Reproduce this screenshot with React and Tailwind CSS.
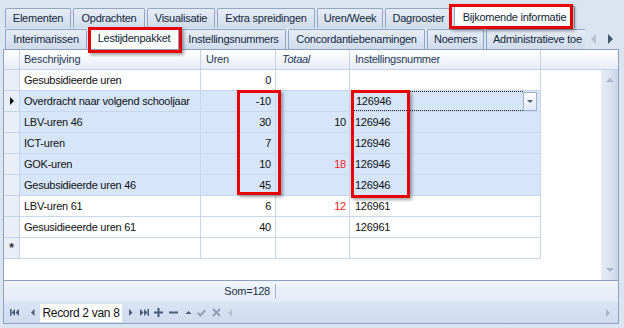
import React from 'react';

const topTabs = [
    { label: 'Elementen', w: 'w-[66px]' },
    { label: 'Opdrachten', w: 'w-[72px]' },
    { label: 'Visualisatie', w: 'w-[68px]' },
    { label: 'Extra spreidingen', w: 'w-[98px]' },
    { label: 'Uren/Week', w: 'w-[66px]' },
    { label: 'Dagrooster', w: 'w-[67px]' },
    { label: 'Bijkomende informatie', w: 'w-[121px]', active: true },
];

const subTabs = [
    { label: 'Interimarissen', w: 'w-[82px]' },
    { label: 'Lestijdenpakket', w: 'w-[90px]', active: true },
    { label: 'Instellingsnummers', w: 'w-[105px]' },
    { label: 'Concordantiebenamingen', w: 'w-[137px]' },
    { label: 'Noemers', w: 'w-[57px]' },
    { label: 'Administratieve toe', w: 'w-[100px]', clip: true },
];

const rows = [
    { name: 'Gesubsidieerde uren', uren: '0', totaal: '', nr: '' },
    { name: 'Overdracht naar volgend schooljaar', uren: '-10', totaal: '', nr: '126946', sel: true, current: true },
    { name: 'LBV-uren 46', uren: '30', totaal: '10', nr: '126946', sel: true },
    { name: 'ICT-uren', uren: '7', totaal: '', nr: '126946', sel: true },
    { name: 'GOK-uren', uren: '10', totaal: '18', red: true, nr: '126946', sel: true },
    { name: 'Gesubsidieerde uren 46', uren: '45', totaal: '', nr: '126946', sel: true },
    { name: 'LBV-uren 61', uren: '6', totaal: '12', red: true, nr: '126961' },
    { name: 'Gesusidieeerde uren 61', uren: '40', totaal: '', nr: '126961' },
];

const Tab = ({ label, w, active, clip }) => (
    <div
        className={`${w} flex items-center justify-center shrink-0 border border-b-0 rounded-t-[2px] whitespace-nowrap overflow-hidden ${active
            ? 'h-[22px] bg-white border-[#8ea3bf] text-[#0f1f33]'
            : 'h-[20px] bg-gradient-to-b from-[#e6edf7] to-[#cfdbec] border-[#92a6c2] text-[#15283d]'
            } ${clip ? 'justify-start pl-[6px]' : ''}`}
    >
        {label}
    </div>
);

const Tri = ({ dir = 'right', color = '#4a5a78', size = 4 }) => {
    const pts = {
        right: `0,0 ${size},${size} 0,${size * 2}`,
        left: `${size},0 0,${size} ${size},${size * 2}`,
        up: `0,${size} ${size},0 ${size * 2},${size}`,
        down: `0,0 ${size * 2},0 ${size},${size}`,
    }[dir];
    const vw = dir === 'up' || dir === 'down' ? size * 2 : size;
    const vh = dir === 'up' || dir === 'down' ? size : size * 2;
    return (
        <svg width={vw} height={vh} viewBox={`0 0 ${vw} ${vh}`}>
            <polygon points={pts} fill={color} />
        </svg>
    );
};

const DataRow = ({ r }) => {
    const cell = r.sel ? 'bg-[#d6e5fa]' : 'bg-white';
    return (
        <div className="flex h-[21px] shrink-0">
            <div className="w-[16px] flex items-center justify-center bg-[#e9eef7] border-r border-b border-[#c3d2e6]">
                {r.current && <Tri color="#111" size={4} />}
            </div>
            <div className={`w-[181px] ${cell} border-r border-b border-[#c8d7ec] pl-[4px] flex items-center text-[#111] whitespace-nowrap`}>{r.name}</div>
            <div className={`w-[75px] ${cell} border-r border-b border-[#c8d7ec] pr-[4px] flex items-center justify-end text-[#111]`}>{r.uren}</div>
            <div className={`w-[74px] ${cell} border-r border-b border-[#c8d7ec] pr-[3px] flex items-center justify-end ${r.red ? 'text-[#ff1a1a]' : 'text-[#111]'}`}>{r.totaal}</div>
            <div className={`w-[191px] ${cell} border-r border-b border-[#c8d7ec] flex items-center text-[#111]`}>
                {r.current ? (
                    <div className="flex items-center w-full h-full pl-[1px] pr-[3px]">
                        <div className="flex-1 h-[20px] border border-dotted border-[#222] border-r-0 pl-[4px] flex items-center">{r.nr}</div>
                        <div className="w-[14px] h-[19px] border border-[#9fb2cc] bg-gradient-to-b from-white to-[#dde6f3] flex items-center justify-center">
                            <Tri dir="down" color="#4f5d75" size={3} />
                        </div>
                    </div>
                ) : (
                    <span className="pl-[5px]">{r.nr}</span>
                )}
            </div>
        </div>
    );
};

const NavIcon = ({ children, className = '' }) => (
    <div className={`flex items-center justify-center ${className}`}>{children}</div>
);

export default function App() {
    return (
        <div className="w-[624px] h-[328px] bg-[#dbe5f2] relative overflow-hidden font-['Liberation_Sans',Arial,sans-serif] text-[11px] tracking-[-0.25px] leading-none">
            {/* Main tab strip */}
            <div className="flex items-end gap-[2px] h-[28px] pl-[5px]">
                {topTabs.map((t) => <Tab key={t.label} {...t} />)}
            </div>

            {/* Sub tab strip */}
            <div className="flex items-end h-[21px] pl-[5px] pr-[5px]">
                <div className="flex items-end gap-[2px] w-[580px] overflow-hidden">
                    {subTabs.map((t) => <Tab key={t.label} {...t} />)}
                </div>
                <div className="flex-1 flex items-center justify-around h-[20px] pb-[1px]">
                    <Tri dir="left" color="#b4c0d0" size={5} />
                    <Tri dir="right" color="#46556e" size={5} />
                </div>
            </div>

            {/* Grid */}
            <div className="ml-[3px] w-[616px] h-[275px] border border-[#8ba1be] bg-white flex flex-col">
                {/* Header */}
                <div className="flex h-[20px] shrink-0 bg-gradient-to-b from-white to-[#e5ecf6] text-[#1f3a5c]">
                    <div className="w-[16px] border-r border-b border-[#c3d2e6]" />
                    <div className="w-[181px] border-r border-b border-[#c3d2e6] pl-[4px] flex items-center">Beschrijving</div>
                    <div className="w-[75px] border-r border-b border-[#c3d2e6] pl-[5px] flex items-center">Uren</div>
                    <div className="w-[74px] border-r border-b border-[#c3d2e6] pl-[6px] flex items-center italic">Totaal</div>
                    <div className="w-[191px] border-r border-b border-[#c3d2e6] pl-[5px] flex items-center">Instellingsnummer</div>
                    <div className="flex-1 border-b border-[#c3d2e6]" />
                </div>

                {/* Body */}
                <div className="flex h-[210px] shrink-0">
                    <div className="flex-1 flex flex-col">
                        {rows.map((r) => <DataRow key={r.name} r={r} />)}
                        <div className="flex h-[21px] shrink-0">
                            <div className="w-[16px] flex items-center justify-center bg-[#e9eef7] border-r border-b border-[#c3d2e6] text-[12px] font-bold text-[#333]">*</div>
                            <div className="w-[181px] border-r border-b border-[#c8d7ec]" />
                            <div className="w-[75px] border-r border-b border-[#c8d7ec]" />
                            <div className="w-[74px] border-r border-b border-[#c8d7ec]" />
                            <div className="w-[191px] border-r border-b border-[#c8d7ec]" />
                        </div>
                    </div>
                    {/* Vertical scrollbar */}
                    <div className="w-[17px] bg-gradient-to-r from-[#e4ebf5] via-[#dbe4f0] to-[#c9d6e8] flex flex-col items-center justify-between py-[8px]">
                        <Tri dir="up" color="#a9b6c9" size={4} />
                        <Tri dir="down" color="#a9b6c9" size={4} />
                    </div>
                </div>

                {/* Summary footer */}
                <div className="flex h-[22px] shrink-0 border-t border-[#8ba1be] bg-gradient-to-b from-[#eff4fb] to-[#e3ebf6]">
                    <div className="w-[197px]" />
                    <div className="w-[75px] border-r border-[#a3b4cb] my-[3px] pr-[5px] flex items-center justify-end text-[#1d2f48]">Som=128</div>
                </div>

                {/* Navigator */}
                <div className="flex items-center h-[21px] shrink-0 bg-gradient-to-b from-[#d9e4f3] to-[#cfdcee] pl-[6px]">
                    <NavIcon className="w-[9px]">
                        <svg width="9" height="7" viewBox="0 0 9 7"><rect x="0" y="0" width="1.5" height="7" fill="#4a5a78" /><polygon points="5,0 1.5,3.5 5,7" fill="#4a5a78" /><polygon points="9,0 5.5,3.5 9,7" fill="#4a5a78" /></svg>
                    </NavIcon>
                    <NavIcon className="w-[10px] ml-[9px]"><Tri dir="left" color="#4a5a78" size={3.5} /></NavIcon>
                    <div className="ml-[2px] w-[82px] h-[18px] bg-white flex items-center justify-center text-[12px] tracking-[-0.3px] text-[#111]">Record 2 van 8</div>
                    <NavIcon className="w-[10px] ml-[4px]"><Tri dir="right" color="#4a5a78" size={3.5} /></NavIcon>
                    <NavIcon className="w-[10px] ml-[3px]">
                        <svg width="9" height="7" viewBox="0 0 9 7"><polygon points="0,0 3.5,3.5 0,7" fill="#4a5a78" /><polygon points="4,0 7.5,3.5 4,7" fill="#4a5a78" /><rect x="7.5" y="0" width="1.5" height="7" fill="#4a5a78" /></svg>
                    </NavIcon>
                    <NavIcon className="w-[10px] ml-[4px]">
                        <svg width="9" height="9" viewBox="0 0 9 9"><rect x="3.5" y="0" width="2" height="9" fill="#4a5a78" /><rect x="0" y="3.5" width="9" height="2" fill="#4a5a78" /></svg>
                    </NavIcon>
                    <NavIcon className="w-[10px] ml-[5px]">
                        <svg width="9" height="9" viewBox="0 0 9 9"><rect x="0" y="3.5" width="9" height="2" fill="#4a5a78" /></svg>
                    </NavIcon>
                    <NavIcon className="w-[10px] ml-[5px]"><Tri dir="up" color="#4a5a78" size={3.5} /></NavIcon>
                    <NavIcon className="w-[10px] ml-[3px]">
                        <svg width="9" height="8" viewBox="0 0 9 8"><polyline points="0.8,4 3.3,6.5 8.2,1.2" fill="none" stroke="#8f9db3" strokeWidth="2" /></svg>
                    </NavIcon>
                    <NavIcon className="w-[10px] ml-[5px]">
                        <svg width="9" height="9" viewBox="0 0 9 9"><path d="M1 1 L8 8 M8 1 L1 8" stroke="#8f9db3" strokeWidth="2" /></svg>
                    </NavIcon>
                    <NavIcon className="w-[8px] ml-[5px]"><Tri dir="left" color="#b8c4d4" size={4} /></NavIcon>
                    <div className="flex-1" />
                    <NavIcon className="w-[8px] mr-[6px]"><Tri dir="right" color="#a8b6ca" size={4} /></NavIcon>
                </div>
            </div>

            {/* Highlight boxes */}
            <div className="absolute left-[449px] top-[4px] w-[124px] h-[25px] border-[3px] border-[#e60000] shadow-[2px_2px_3px_rgba(0,0,0,0.35)]" />
            <div className="absolute left-[88px] top-[27px] w-[94px] h-[26px] border-[3px] border-[#e60000] shadow-[2px_2px_3px_rgba(0,0,0,0.35)]" />
            <div className="absolute left-[237px] top-[90px] w-[44px] h-[105px] border-[3px] border-[#e60000] shadow-[2px_2px_3px_rgba(0,0,0,0.35)]" />
            <div className="absolute left-[351px] top-[90px] w-[59px] h-[108px] border-[3px] border-[#e60000] shadow-[2px_2px_3px_rgba(0,0,0,0.35)]" />
        </div>
    );
}
